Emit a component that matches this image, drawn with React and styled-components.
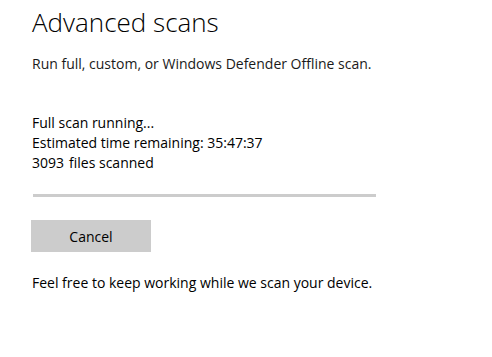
import React from "react";
import styled, { createGlobalStyle } from "styled-components";

const GlobalStyle = createGlobalStyle`
  html, body {
    margin: 0;
    padding: 0;
    background: #ffffff;
  }
  body {
    font-family: "Open Sans", "Noto Sans", sans-serif;
    color: #000000;
  }
`;

const Page = styled.div`
  width: 492px;
  height: 357px;
  box-sizing: border-box;
  padding: 4px 32px 0 32px;
  display: flex;
  flex-direction: column;
`;

const Title = styled.h1`
  margin: 0;
  font-size: 26px;
  font-weight: 300;
  line-height: 36px;
  color: #000;
`;

const Subtitle = styled.p`
  margin: 14px 0 0;
  font-size: 14px;
  line-height: 20px;
  color: #1a1a1a;
`;

const Status = styled.div`
  margin-top: 39px;
  display: flex;
  flex-direction: column;
`;

const Line = styled.div`
  font-size: 14px;
  line-height: 20px;
`;

const Count = styled.span`
  margin-right: 5px;
`;

const Progress = styled.div`
  margin-top: 21px;
  margin-left: 1px;
  width: 343px;
  height: 3px;
  background: #cccccc;
`;

const Button = styled.button`
  margin-top: 23px;
  margin-left: -1px;
  width: 120px;
  height: 32px;
  border: none;
  background: #cccccc;
  font-family: inherit;
  font-size: 14px;
  color: #000;
  padding: 0;
  cursor: pointer;
`;

const Note = styled.p`
  margin: 21px 0 0;
  font-size: 14px;
  line-height: 20px;
`;

const App = () => (
  <>
    <GlobalStyle />
    <Page>
      <Title>Advanced scans</Title>
      <Subtitle>Run full, custom, or Windows Defender Offline scan.</Subtitle>
      <Status>
        <Line>Full scan running...</Line>
        <Line>Estimated time remaining: 35:47:37</Line>
        <Line>
          <Count>3093</Count>files scanned
        </Line>
      </Status>
      <Progress />
      <Button>Cancel</Button>
      <Note>Feel free to keep working while we scan your device.</Note>
    </Page>
  </>
);

export default App;
